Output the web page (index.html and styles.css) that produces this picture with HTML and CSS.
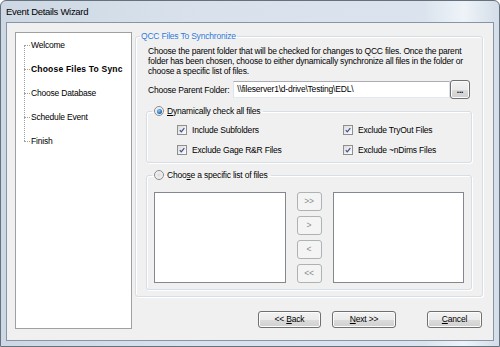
FILE: index.html
```html
<!DOCTYPE html>
<html lang="en">
<head>
    <meta charset="UTF-8">
    <title>Event Details Wizard</title>
    <link rel="stylesheet" href="styles.css">
</head>
<body>
    <div class="window">
        <div class="titlebar">Event Details Wizard</div>
        <div class="client">
            <ul class="steps">
                <li>Welcome</li>
                <li class="current">Choose Files To Sync</li>
                <li>Choose Database</li>
                <li>Schedule Event</li>
                <li>Finish</li>
            </ul>
            <div class="page">
                <fieldset class="group">
                    <legend class="group-title">QCC Files To Synchronize</legend>
                    <p class="desc">Choose the parent folder that will be checked for changes to QCC files. Once the parent<br>folder has been chosen, choose to either dynamically synchronize all files in the folder or<br>choose a specific list of files.</p>
                    <div class="folder-row">
                        <span class="folder-label">Choose Parent Folder:</span>
                        <div class="textbox">\\fileserver1\d-drive\Testing\EDL\</div>
                        <button class="btn browse">...</button>
                    </div>

                    <fieldset class="sub">
                        <legend class="option"><span class="radio checked"></span><span><u>D</u>ynamically check all files</span></legend>
                        <div class="checks">
                            <div class="check"><span class="box"><svg viewBox="0 0 10 10" width="10" height="10"><path d="M2.2 5.2 L4.1 7.3 L7.9 2.6" fill="none" stroke="#3b4f8a" stroke-width="1.5"/></svg></span>Include Subfolders</div>
                            <div class="check"><span class="box"><svg viewBox="0 0 10 10" width="10" height="10"><path d="M2.2 5.2 L4.1 7.3 L7.9 2.6" fill="none" stroke="#3b4f8a" stroke-width="1.5"/></svg></span>Exclude TryOut Files</div>
                            <div class="check"><span class="box"><svg viewBox="0 0 10 10" width="10" height="10"><path d="M2.2 5.2 L4.1 7.3 L7.9 2.6" fill="none" stroke="#3b4f8a" stroke-width="1.5"/></svg></span>Exclude Gage R&amp;R Files</div>
                            <div class="check"><span class="box"><svg viewBox="0 0 10 10" width="10" height="10"><path d="M2.2 5.2 L4.1 7.3 L7.9 2.6" fill="none" stroke="#3b4f8a" stroke-width="1.5"/></svg></span>Exclude ~nDims Files</div>
                        </div>
                    </fieldset>

                    <fieldset class="sub">
                        <legend class="option"><span class="radio"></span><span>Choo<u>s</u>e a specific list of files</span></legend>
                        <div class="lists">
                            <div class="listbox"></div>
                            <div class="movers">
                                <button class="btn mover" disabled>&gt;&gt;</button>
                                <button class="btn mover" disabled>&gt;</button>
                                <button class="btn mover" disabled>&lt;</button>
                                <button class="btn mover" disabled>&lt;&lt;</button>
                            </div>
                            <div class="listbox"></div>
                        </div>
                    </fieldset>
                </fieldset>

                <div class="footer">
                    <button class="btn nav back">&lt;&lt; <u>B</u>ack</button>
                    <button class="btn nav next"><u>N</u>ext &gt;&gt;</button>
                    <button class="btn nav cancel"><u>C</u>ancel</button>
                </div>
            </div>
        </div>
    </div>
</body>
</html>
```

FILE: styles.css
```css
body {
    margin: 0;
    width: 500px;
    height: 347px;
    overflow: hidden;
    background: #ffffff;
    font-family: "Liberation Sans", Arial, sans-serif;
    font-size: 8.5px;
    letter-spacing: -0.2px;
    color: #000;
}

.window {
    box-sizing: border-box;
    width: 500px;
    height: 347px;
    border: 1px solid #66717e;
    border-radius: 6px 6px 0 0;
    background: linear-gradient(to right, #cdd8e4 0%, #d9e2ec 40%, #dbe4ee 85%, #eef3f8 93%, #d3dde8 100%);
    padding: 0 5px 5px;
    display: flex;
    flex-direction: column;
}

.titlebar {
    height: 21px;
    line-height: 21px;
    font-size: 9.5px;
    letter-spacing: -0.3px;
}

.client {
    flex: 1;
    display: flex;
    border: 1px solid #8895a4;
    background: #f0f0f0;
    padding: 9px 10px 11px 8px;
}

/* wizard steps */
.steps {
    list-style: none;
    margin: 0;
    padding: 0;
    width: 115px;
    border: 1px solid #a0a0a0;
    background: #fff;
    flex-shrink: 0;
}

.steps li {
    position: relative;
    height: 24px;
    line-height: 24px;
    padding-left: 15px;
    white-space: nowrap;
}

.steps li::before {
    content: "";
    position: absolute;
    left: 8px;
    top: 12px;
    width: 6px;
    border-top: 1px dotted #a0a0a0;
}

.steps li:not(:last-child)::after {
    content: "";
    position: absolute;
    left: 8px;
    top: 12px;
    height: 24px;
    border-left: 1px dotted #a0a0a0;
}

.steps li.current {
    font-weight: bold;
    letter-spacing: 0.2px;
}

/* right side */
.page {
    flex: 1;
    margin-left: 3px;
    margin-top: -2px;
    display: flex;
    flex-direction: column;
}

fieldset {
    margin: 0;
    min-width: 0;
    border: 1px solid #d5dfe5;
    border-radius: 3px;
    box-shadow: inset 1px 1px 0 #fff, 1px 1px 0 #fff;
}

legend {
    line-height: 12px;
    height: 12px;
    padding: 0 2px;
}

.group {
    padding: 4px 10px 6px;
}

.group-title {
    margin-left: -6px;
    padding: 0 1px;
    color: #2f7ad8;
}

.desc {
    margin: 0 0 0 2px;
    line-height: 10px;
    white-space: nowrap;
}

.folder-row {
    display: flex;
    align-items: center;
    margin-top: 4px;
    height: 19px;
}

.folder-label {
    margin-left: 2px;
    margin-right: 4px;
}

.textbox {
    flex: 1;
    height: 15px;
    line-height: 15px;
    padding-left: 3px;
    background: #fff;
    border: 1px solid #abadb3;
    border-color: #abadb3 #dbdfe6 #e3e9ef #e2e3ea;
    white-space: nowrap;
}

.btn {
    box-sizing: border-box;
    font-family: inherit;
    font-size: 8.5px;
    letter-spacing: -0.2px;
    color: #000;
    padding: 0;
    border: 1px solid #707070;
    border-radius: 3px;
    background: linear-gradient(to bottom, #f2f2f2 0%, #ebebeb 50%, #dddddd 50%, #cfcfcf 100%);
    box-shadow: inset 0 0 0 1px #fcfcfc;
}

.btn u {
    text-decoration-thickness: 1px;
}

.browse {
    width: 20px;
    height: 19px;
    margin-right: 2px;
    font-weight: bold;
    line-height: 12px;
}

.sub {
    padding: 6px 0 6px;
}

.sub + .sub {
    margin-top: 6px;
}

.group > .sub:first-of-type {
    margin-top: 6px;
}

.option {
    display: flex;
    align-items: center;
    gap: 3px;
    margin-left: 5px;
    padding: 0 3px 0 2px;
}

.radio {
    box-sizing: border-box;
    width: 10px;
    height: 10px;
    border-radius: 50%;
    border: 1px solid #8b8b8b;
    background: radial-gradient(circle at 50% 50%, #dcdcdc 0%, #f4f4f4 70%, #fdfdfd 100%);
    display: flex;
    align-items: center;
    justify-content: center;
}

.radio.checked::after {
    content: "";
    width: 5px;
    height: 5px;
    border-radius: 50%;
    background: radial-gradient(circle at 40% 35%, #8fd0ff 0%, #2a78c8 55%, #0e3f84 100%);
}

.checks {
    display: grid;
    grid-template-columns: 166px auto;
    row-gap: 7px;
    padding-left: 30px;
}

.check {
    display: flex;
    align-items: center;
    height: 13px;
    gap: 5px;
    white-space: nowrap;
}

.box {
    box-sizing: border-box;
    width: 10px;
    height: 10px;
    border: 1px solid #8f8f8f;
    background: linear-gradient(135deg, #dcdcdc 0%, #f0f0f0 60%, #fbfbfb 100%);
    display: flex;
    align-items: center;
    justify-content: center;
}

.box svg {
    width: 8px;
    height: 8px;
}

.lists {
    display: flex;
    gap: 11px;
    padding: 5px 7px 0;
    height: 91px;
}

.listbox {
    flex: 1;
    background: #fff;
    border: 1px solid #828790;
}

.movers {
    display: flex;
    flex-direction: column;
    justify-content: space-between;
    width: 25px;
}

.mover {
    height: 19px;
    border-color: #adb2b5;
    background: #f4f4f4;
    box-shadow: none;
    color: #8a8a8a;
    line-height: 17px;
}

.footer {
    display: flex;
    justify-content: flex-end;
    margin-top: 14px;
    padding-right: 1px;
}

.nav {
    height: 17px;
    line-height: 15px;
}

.back {
    width: 63px;
}

.next {
    width: 64px;
    margin-left: 11px;
}

.cancel {
    width: 55px;
    margin-left: 31px;
}
```
